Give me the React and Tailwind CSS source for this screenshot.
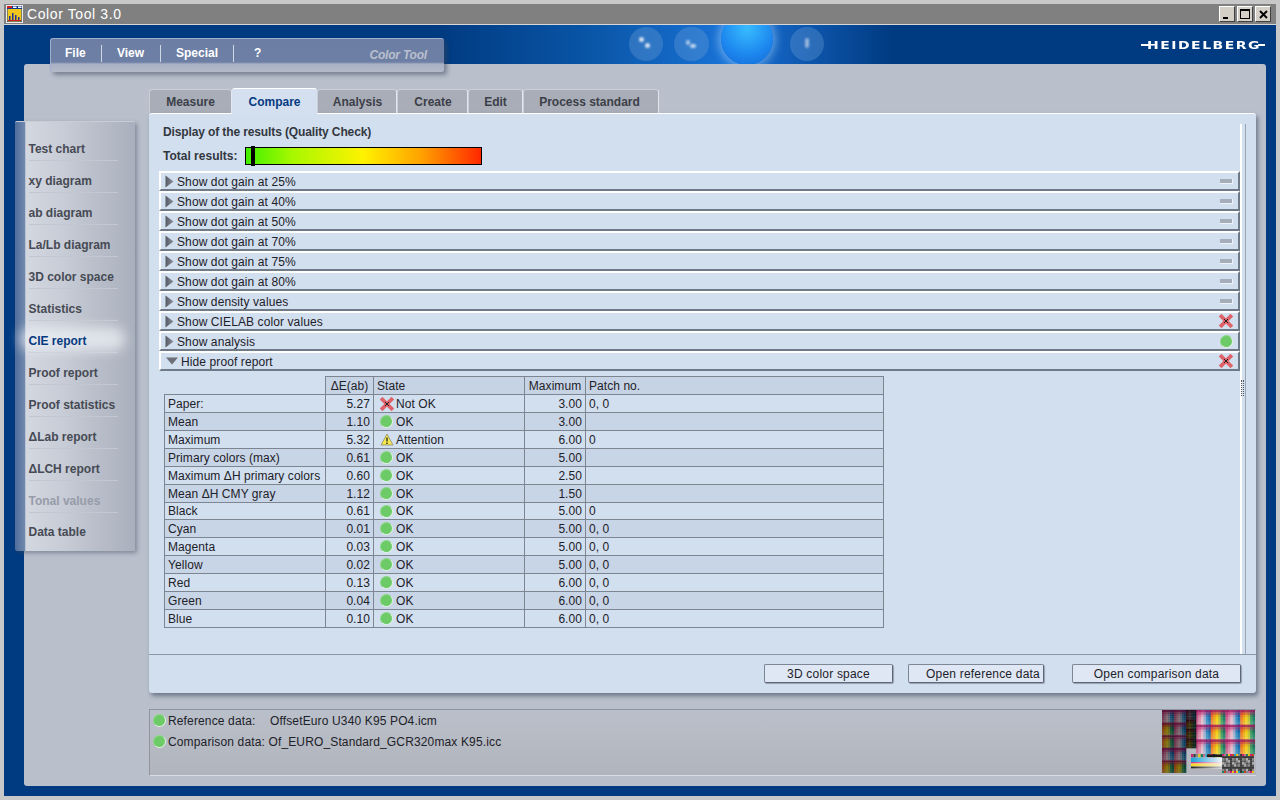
import React from "react";

const side = [
  ["Test chart", "n"], ["xy diagram", "n"], ["ab diagram", "n"], ["La/Lb diagram", "n"], ["3D color space", "n"],
  ["Statistics", "n"], ["CIE report", "a"], ["Proof report", "n"], ["Proof statistics", "n"], ["ΔLab report", "n"],
  ["ΔLCH report", "n"], ["Tonal values", "d"], ["Data table", "l"],
];
const rows = [
  ["Show dot gain at 25%", "m"], ["Show dot gain at 40%", "m"], ["Show dot gain at 50%", "m"], ["Show dot gain at 70%", "m"],
  ["Show dot gain at 75%", "m"], ["Show dot gain at 80%", "m"], ["Show density values", "m"], ["Show CIELAB color values", "x"],
  ["Show analysis", "o"],
];
const table = [
  ["Paper:", "5.27", "x", "Not OK", "3.00", "0, 0"],
  ["Mean", "1.10", "o", "OK", "3.00", ""],
  ["Maximum", "5.32", "w", "Attention", "6.00", "0"],
  ["Primary colors (max)", "0.61", "o", "OK", "5.00", ""],
  ["Maximum ΔH primary colors", "0.60", "o", "OK", "2.50", ""],
  ["Mean ΔH CMY gray", "1.12", "o", "OK", "1.50", ""],
  ["Black", "0.61", "o", "OK", "5.00", "0"],
  ["Cyan", "0.01", "o", "OK", "5.00", "0, 0"],
  ["Magenta", "0.03", "o", "OK", "5.00", "0, 0"],
  ["Yellow", "0.02", "o", "OK", "5.00", "0, 0"],
  ["Red", "0.13", "o", "OK", "6.00", "0, 0"],
  ["Green", "0.04", "o", "OK", "6.00", "0, 0"],
  ["Blue", "0.10", "o", "OK", "6.00", "0, 0"],
];
const tabs = [
  ["Measure", "w-[83px]"], ["Compare", "w-[85px]"], ["Analysis", "w-[80px] pl-[1px]"], ["Create", "w-[71px] pl-[1px]"], ["Edit", "w-[55px]"], ["Process standard", "w-[136px] pr-[3px]"],
];

const Cross = () => (
  <svg width="14" height="14" viewBox="0 0 14 14" className="shrink-0">
    <path d="M2.5 2.5L11.5 11.5M11.5 2.5L2.5 11.5" stroke="#de6268" strokeWidth="3.8" strokeLinecap="square" />
    <path d="M5 5L9 9M9 5L5 9" stroke="#222" strokeWidth="1" />
  </svg>
);
const Dot = () => <span className="block w-[13px] h-[13px] shrink-0 rounded-full bg-[#6ccb66] border border-[#8fd68a] border-r-[#e4f2e4] border-b-[#e4f2e4]" />;
const Warn = () => (
  <svg width="14" height="13" viewBox="0 0 14 13" className="shrink-0">
    <path d="M7 1L13 12H1Z" fill="#f4e84c" stroke="#8a8a70" strokeWidth="0.8" />
    <path d="M7 4.5V8.5M7 9.5V11" stroke="#222" strokeWidth="1.3" />
  </svg>
);
const Dash = () => <span className="block w-[13px] h-[5px] bg-[#a5adba] border-r border-b border-[#eef2f8]" />;
const Status = ({ k }) => (k === "x" ? <Cross /> : k === "o" ? <Dot /> : k === "w" ? <Warn /> : <Dash />);

const Right = () => (
  <svg width="9" height="13" viewBox="0 0 9 13" className="shrink-0">
    <defs><linearGradient id="tri" x1="0" x2="1"><stop offset="0" stopColor="#555a64" /><stop offset="1" stopColor="#8a909a" /></linearGradient></defs>
    <path d="M0.5 0.5L8.5 6.5L0.5 12.5Z" fill="url(#tri)" />
  </svg>
);
const Down = () => (
  <svg width="12" height="8" viewBox="0 0 12 8" className="shrink-0"><path d="M0 0.5H12L6 7.5Z" fill="#6a6f78" /></svg>
);

function AppIcon() {
  return (
    <svg width="17" height="18" viewBox="0 0 17 18" className="shrink-0">
      <rect x="0" y="0" width="17" height="18" fill="#e8e8f0" />
      <rect x="1" y="1" width="15" height="16" fill="#123a8a" />
      <rect x="1" y="1" width="5" height="2" fill="#d02020" />
      <rect x="7" y="1.5" width="3.5" height="1.5" fill="#fff" />
      <rect x="12" y="1.5" width="3.5" height="1.5" fill="#fff" />
      <rect x="1.5" y="4" width="14" height="12.5" fill="#f2c71c" />
      <path d="M3 15V11H4.5V15ZM6 15V8H7.5V15ZM9 15V10H10.5V15ZM12 15V12H13.5V15Z" fill="#1c2f9a" />
      <rect x="2" y="15" width="13" height="1" fill="#d02020" />
    </svg>
  );
}

const hex = (c) => [1, 3, 5].map((i) => parseInt(c.slice(i, i + 2), 16));
const mix = (a, b, t) => a.map((v, i) => v + (b[i] - v) * t);
const css = (c, d = 1) => `rgb(${c.map((v) => Math.round(v * d)).join(",")})`;
const TILE = {
  A: ["#c85888", "#d888a8", "#e8b8c8", "#98b0d0", "#2888c0", "#0868a8"].map(hex),
  B: ["#f07818", "#f0a808", "#f4d008", "#b8c028", "#309858", "#087858"].map(hex),
};
function tile(key, type, x, y, w, h, dark) {
  const out = [];
  const cw = w / 6, ch = h / 6;
  for (let v = 0; v < 6; v++) {
    for (let u = 0; u < 6; u++) {
      let c = TILE[type][u];
      if (v === 0) c = mix(c, hex("#a01060"), 0.8);
      else if (v === 1) c = mix(c, hex("#b81868"), 0.45);
      else if (v === 2) c = mix(c, hex("#c82878"), 0.12);
      else c = mix(c, [245, 240, 235], (v - 2) * 0.07);
      out.push(<rect key={`${key}-${u}-${v}`} x={x + u * cw} y={y + v * ch} width={cw + 0.3} height={ch + 0.3} fill={css(c, dark)} />);
    }
  }
  return out;
}

function Mosaic() {
  const cells = [];
  const bt = ["A", "B", "A", "B"];
  for (let r = 0; r < 3; r++) for (let c = 0; c < 4; c++) cells.push(tile(`b${r}${c}`, bt[c], 34 + c * 14.75, r * 14.7, 14.75, 14.7, 1));
  const lt = [["A", "A"], ["B", "A"], ["B", "A"], ["A", "A"], ["B", "B"]];
  for (let r = 0; r < 5; r++) for (let c = 0; c < 2; c++) cells.push(tile(`l${r}${c}`, lt[r][c], c * 12, r * 12.6, 12, 12.6, 0.55));
  for (let r = 0; r < 4; r++) cells.push(tile(`m${r}`, r ? "B" : "A", 24, r * 9.5, 10, 9.5, 0.24));
  const pal = ["#d02070", "#e8c010", "#20a0c0", "#383838", "#208060", "#d04020", "#808890", "#c07090"];
  const grays = ["#505050", "#8a8a8a", "#b0b0b0", "#383838", "#6a6a6a"];
  const noisy = [];
  for (let r = 0; r < 9; r++) {
    for (let c = 0; c < 16; c++) {
      const n = (c * 7 + r * 13 + c * r * 3) % 10;
      const color = r < 2 || r > 7 ? pal[n % 8] : grays[n % 5];
      noisy.push(<rect key={`n${r}${c}`} x={60 + c * 2} y={44 + r * 2.12} width="2" height="2.2" fill={color} />);
    }
  }
  const ticks = [];
  for (let c = 0; c < 13; c++) {
    ticks.push(<rect key={`t${c}`} x={29 + c * 2.4} y="44" width="2.4" height="3.6" fill={pal[(c * 3) % 8]} />);
  }
  return (
    <svg width="93" height="63" viewBox="0 0 93 63" className="shrink-0">
      <defs>
        <linearGradient id="cy" x1="0" x2="1"><stop offset="0" stopColor="#18a0d8" /><stop offset="1" stopColor="#f0f4f8" /></linearGradient>
        <linearGradient id="ye" x1="0" x2="1"><stop offset="0" stopColor="#f2d820" /><stop offset="1" stopColor="#f4f0e0" /></linearGradient>
        <linearGradient id="ma" x1="0" x2="1"><stop offset="0" stopColor="#d83080" /><stop offset="1" stopColor="#f4e8ee" /></linearGradient>
        <linearGradient id="bk" x1="0" x2="1"><stop offset="0" stopColor="#202020" /><stop offset="1" stopColor="#c8c8c8" /></linearGradient>
      </defs>
      {cells}
      <rect x="29" y="44" width="31" height="15" fill="#eeeeee" />
      {ticks}
      <rect x="29" y="47.5" width="31" height="4.5" fill="url(#cy)" />
      <rect x="29" y="52" width="31" height="1.5" fill="url(#ma)" />
      <rect x="29" y="53.5" width="31" height="3" fill="url(#ye)" />
      <rect x="29" y="56.5" width="31" height="2" fill="url(#bk)" />
      <rect x="45" y="44.5" width="15" height="2.5" fill="#1a1a1a" />
      {noisy}
    </svg>
  );
}

export default function App() {
  const btn = "h-[19px] pb-[2px] rounded-[2px] bg-[#dfe7f4] border border-[#7c8694] border-r-[#5d6675] border-b-[#5d6675] text-[#1d2128] shadow-[1px_1px_1px_rgba(60,70,90,0.4)]";
  return (
    <div className="w-[1280px] h-[800px] overflow-hidden flex flex-col pt-[4px] px-[4px] bg-[#c8c8c8] font-['Liberation_Sans',Arial,sans-serif] text-[12px] text-[#1d2128]">
      {/* title bar */}
      <div className="h-[20px] shrink-0 bg-[#808080] flex items-center text-white pl-[2px] pr-[5px]">
        <AppIcon />
        <span className="ml-[4px] text-[14px] tracking-[0.6px]">Color Tool 3.0</span>
        <div className="ml-auto flex gap-[2px]">
          {["min", "max", "close"].map((k) => (
            <span key={k} className="w-[16px] h-[16px] bg-[#d4d0c8] border-t border-l border-white border-r border-b border-r-[#404040] border-b-[#404040] flex items-center justify-center">
              {k === "min" && <span className="block w-[5px] h-[2px] bg-black mt-[7px] -ml-[3px]" />}
              {k === "max" && <span className="block w-[10px] h-[10px] border border-black border-t-2" />}
              {k === "close" && (
                <svg width="9" height="9" viewBox="0 0 9 9"><path d="M1 1L8 8M8 1L1 8" stroke="#000" strokeWidth="1.9" /></svg>
              )}
            </span>
          ))}
        </div>
      </div>
      <div className="h-[1px] shrink-0 bg-[#d8d8d8]" />

      {/* blue window */}
      <div className="h-[771px] shrink-0 relative bg-[#003a80] pt-[39px] pl-[20px] pr-[10px] pb-[10px]">
        {/* header art */}
        <div className="absolute left-[430px] top-0 w-[460px] h-[39px] overflow-hidden bg-[linear-gradient(to_right,#003a80_0%,#0a56a8_35%,#1a74d8_65%,#0e58b0_80%,#003a80_100%)]">
          <span className="absolute left-[195px] top-[2px] w-[34px] h-[34px] rounded-full bg-[#6a9fd8]/35" />
          <span className="absolute left-[240px] top-[2px] w-[35px] h-[34px] rounded-full bg-[#6a9fd8]/35" />
          <span className="absolute left-[287px] top-[-12px] w-[52px] h-[52px] rounded-full bg-[radial-gradient(circle_at_50%_30%,#38bcff,#1c86ee_60%,#1468d4)] shadow-[0_0_8px_3px_rgba(170,215,255,0.5)]" />
          <span className="absolute left-[356px] top-[2px] w-[34px] h-[34px] rounded-full bg-[#6a9fd8]/35" />
          <span className="absolute left-[205px] top-[12px] w-[5px] h-[5px] rounded-full bg-white/80 blur-[1px]" />
          <span className="absolute left-[211px] top-[18px] w-[5px] h-[5px] rounded-full bg-white/80 blur-[1px]" />
          <span className="absolute left-[252px] top-[15px] w-[4px] h-[5px] rounded-full bg-white/60 blur-[1px]" />
          <span className="absolute left-[256px] top-[19px] w-[6px] h-[4px] rounded-full bg-white/70 blur-[1px]" />
          <span className="absolute left-[371px] top-[13px] w-[4px] h-[10px] rounded-full bg-white/50 blur-[1px]" />
        </div>
        {/* logo */}
        <div className="absolute left-[1137px] top-[13px] w-[125px] flex items-center text-white">
          <span className="block w-[9px] h-[2px] bg-white -mr-[3px]" />
          <span className="text-[14px] leading-[14px] font-['DejaVu_Sans',sans-serif] font-bold tracking-[1.5px] scale-y-[0.8]">HEIDELBERG</span>
          <span className="block w-[7px] h-[2px] bg-white -ml-[3px]" />
        </div>

        {/* gray panel */}
        <div className="relative h-full rounded-[3px] bg-[#b9c0cc] flex">
          {/* menu */}
          <div className="absolute left-[26px] -top-[26px] w-[394px] h-[34px] rounded-[3px] border-t border-l border-[#9fb0cc] shadow-[3px_3px_4px_rgba(60,70,90,0.5)] bg-[linear-gradient(to_bottom,#6c7ea4_0%,#6e7fa5_70%,#a9b1c4_76%,#b3b9c8_100%)]">
            <div className="flex items-center h-[28px] text-white font-bold">
              <span className="w-[51px] pl-[14px] border-r border-[#cfd6e6] leading-[17px]">File</span>
              <span className="w-[59px] pl-[15px] border-r border-[#cfd6e6] leading-[17px]">View</span>
              <span className="w-[73px] pl-[15px] border-r border-[#cfd6e6] leading-[17px]">Special</span>
              <span className="pl-[20px] leading-[17px]">?</span>
              <span className="ml-auto mr-[17px] mt-[3px] italic font-bold text-[#b9c0cd] tracking-[-0.2px]">Color Tool</span>
            </div>
          </div>

          {/* sidebar */}
          <div className="relative shrink-0 -ml-[9px] mt-[57px] w-[120px] h-[430px] rounded-[2px] border-t border-[#c8cdd6] shadow-[2px_2px_4px_rgba(60,70,90,0.45)] bg-[linear-gradient(to_right,#4f6d9b_0%,#7088ad_8%,#d3d7e0_9%,#c7ccd6_40%,#a9afbc_100%)] pt-[7px] pl-[14px]">
            {side.map(([t, k], i) => (
              <div
                key={t}
                className={
                  (i === 12 ? "h-[30px]" : "h-[32px] border-b") +
                  " relative w-[89px] border-[#c2c7d1] flex items-end pb-[2px] font-bold whitespace-nowrap -ml-[0.5px] " +
                  (k === "a" ? "text-[#063a80]" : k === "d" ? "text-[#979ca9]" : "text-[#464a54]")
                }
              >
                {k === "a" && <span className="absolute -left-[9px] -right-[7px] top-[6px] bottom-[1px] rounded-full bg-[#eceff4] opacity-75 blur-[6px]" />}
                <span className="relative">{t}</span>
              </div>
            ))}
          </div>

          {/* main column */}
          <div className="ml-[14px] w-[1107px] pt-[24px] flex flex-col shrink-0">
            <div className="flex items-end h-[25px] shrink-0">
              {tabs.map(([t, w], i) => (
                <div
                  key={t}
                  className={
                    w +
                    " flex items-center justify-center font-bold rounded-t-[3px] " +
                    (i === 1
                      ? "h-[26px] relative z-10 -mb-[1px] bg-[#d4e0f0] text-[#063a80] border-t border-white"
                      : "h-[24px] bg-[#a8adb8] text-[#3c3f48] border-t border-l border-[#c9ced7] border-r border-r-[#e2e6ee]")
                  }
                >
                  {t}
                </div>
              ))}
            </div>

            <div className="h-[580px] shrink-0 flex flex-col rounded-[3px] border-t border-white bg-[#d2dfef] shadow-[2px_3px_4px_rgba(50,60,80,0.55)]">
              <div className="relative flex-1 pl-[10px] pt-[10px]">
                {/* scrollbar lines */}
                <span className="absolute left-[1091px] top-[10px] bottom-0 w-[6px] border-l-2 border-l-white border-r border-r-[#9aa4b2]" />
                <span className="absolute left-[1092px] top-[266px] w-[3px] h-[16px] border-l border-r border-dotted border-[#555]" />

                <div className="font-bold text-[#33373f] pl-[4px] h-[16px] leading-[16px] tracking-[-0.12px]">Display of the results (Quality Check)</div>
                <div className="flex items-center pl-[4px] h-[18px] mt-[7px] font-bold text-[#33373f]">
                  <span className="w-[82px]">Total results:</span>
                  <div className="relative w-[237px] h-[18px] border border-black bg-[linear-gradient(to_right,#40f000_0%,#a8f800_20%,#fff200_50%,#ffa000_75%,#ff2800_100%)]">
                    <span className="absolute left-[5px] -top-[2px] w-[4px] h-[20px] bg-black" />
                  </div>
                </div>

                <div className="mt-[6px] w-[1081px] flex flex-col">
                  {rows.map(([t, k]) => (
                    <div key={t} className="h-[20px] flex items-center pl-[4px] pr-[5px] border-t-2 border-l-2 border-white border-r-2 border-b-2 border-r-[#6f7a89] border-b-[#6f7a89] bg-[#d2dfef] tracking-[0.1px]">
                      <Right />
                      <span className="ml-[3px] mt-[2px]">{t}</span>
                      <span className="ml-auto w-[14px] flex justify-center"><Status k={k} /></span>
                    </div>
                  ))}
                  <div className="h-[20px] flex items-center pl-[5px] pr-[5px] border-t-2 border-l-2 border-white border-r-2 border-b-2 border-r-[#6f7a89] border-b-[#6f7a89] bg-[#d2dfef] tracking-[0.1px]">
                    <Down />
                    <span className="ml-[3px] mt-[2px]">Hide proof report</span>
                    <span className="ml-auto w-[14px] flex justify-center"><Cross /></span>
                  </div>
                </div>

                {/* table */}
                <div className="mt-[5px] ml-[5px] w-[720px] tracking-[0.06px]">
                  <div className="flex h-[18px]">
                    <div className="w-[161px]" />
                    <div className="w-[48px] border-t border-l border-[#7d8590] bg-[#c6d3e4] flex items-center justify-center">ΔE(ab)</div>
                    <div className="w-[151px] border-t border-l border-[#7d8590] bg-[#c6d3e4] flex items-center pl-[3px]">State</div>
                    <div className="w-[61px] border-t border-l border-[#7d8590] bg-[#c6d3e4] flex items-center justify-center">Maximum</div>
                    <div className="flex-1 border-t border-l border-r border-[#7d8590] bg-[#c6d3e4] flex items-center pl-[3px]">Patch no.</div>
                  </div>
                  <div className="border-b border-[#7d8590]">
                    {table.map((r, i) => (
                      <div key={r[0]} className={"flex " + (i === 6 ? "h-[17px] " : "h-[18px] ") + (i % 2 ? "bg-[#c8d5e6]" : "bg-[#d2dfef]")}>
                        <div className="w-[161px] border-t border-l border-[#7d8590] flex items-center pl-[3px] whitespace-nowrap">{r[0]}</div>
                        <div className="w-[48px] border-t border-l border-[#7d8590] flex items-center justify-end pr-[3px]">{r[1]}</div>
                        <div className="w-[151px] border-t border-l border-[#7d8590] flex items-center pl-[6px]">
                          <span className="w-[16px] flex justify-start shrink-0"><Status k={r[2]} /></span>
                          {r[3]}
                        </div>
                        <div className="w-[61px] border-t border-l border-[#7d8590] flex items-center justify-end pr-[3px]">{r[4]}</div>
                        <div className="flex-1 border-t border-l border-r border-[#7d8590] flex items-center pl-[3px]">{r[5]}</div>
                      </div>
                    ))}
                  </div>
                </div>
              </div>

              {/* footer */}
              <div className="h-[39px] shrink-0 border-t border-[#8c97a6] flex items-start pt-[9px] tracking-[0.2px]">
                <button className={"ml-[615px] w-[129px] " + btn}>3D color space</button>
                <button className={"ml-[15px] w-[136px] pl-[14px] " + btn}>Open reference data</button>
                <button className={"ml-[28px] w-[169px] " + btn}>Open comparison data</button>
              </div>
            </div>

            {/* status */}
            <div className="mt-[16px] h-[67px] shrink-0 flex border-t border-l border-[#8f95a0] border-b border-b-[#d8dce4] bg-[linear-gradient(to_bottom,#bac0ca_0%,#b1b4bc_100%)] tracking-[0.14px]">
              <div className="pl-[3px] pt-[4px] flex flex-col gap-[8px]">
                <div className="flex items-center h-[13px] gap-[2px]">
                  <Dot />
                  <span className="w-[100px]">Reference data:</span>
                  <span>OffsetEuro U340 K95 PO4.icm</span>
                </div>
                <div className="flex items-center h-[13px] gap-[2px]">
                  <Dot />
                  <span>Comparison data: Of_EURO_Standard_GCR320max K95.icc</span>
                </div>
              </div>
              <div className="ml-auto mr-[1px]"><Mosaic /></div>
            </div>
          </div>
        </div>
      </div>
    </div>
  );
}
